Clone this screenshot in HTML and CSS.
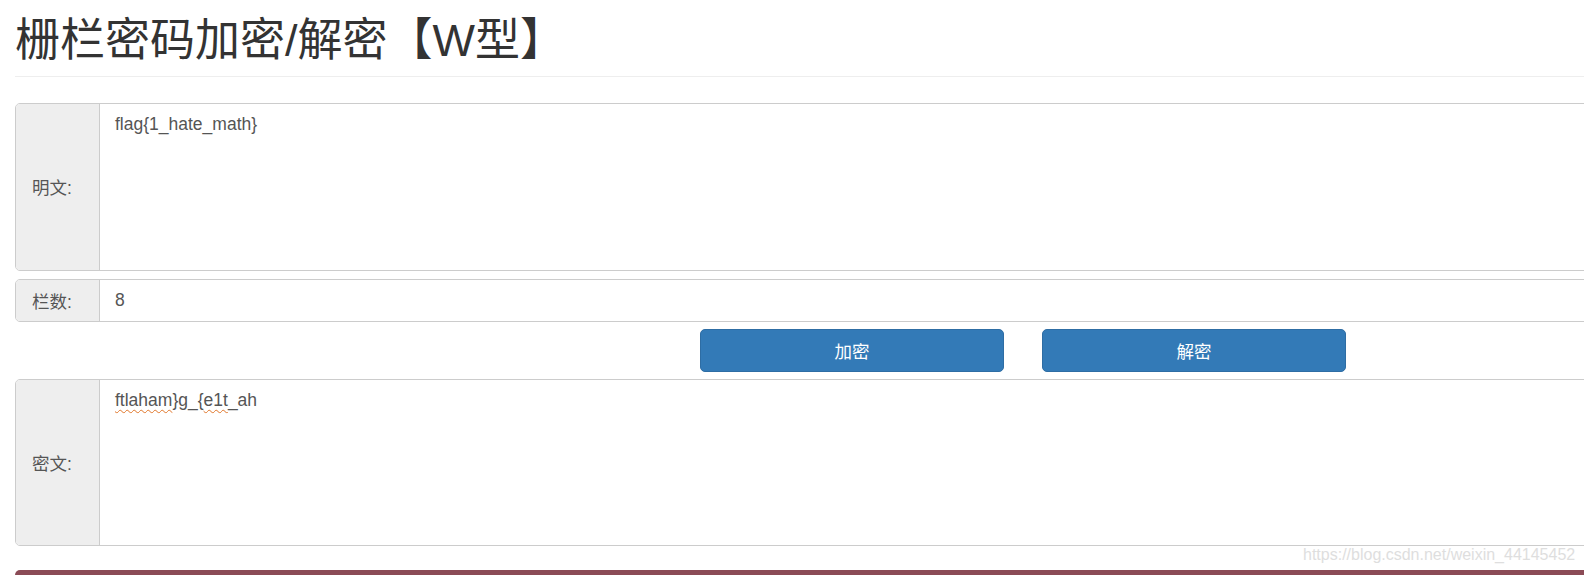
FILE: index.html
```html
<!DOCTYPE html>
<html lang="zh-CN">
<head>
<meta charset="utf-8">
<title>栅栏密码加密/解密【W型】</title>
<link rel="stylesheet" href="styles.css">
</head>
<body>
<div class="page">
  <div class="page-header">
    <h1 class="title">栅栏密码加密/解密【W型】</h1>
  </div>

  <div class="group group-tall">
    <div class="addon">明文:</div>
    <div class="field field-area">flag{1_hate_math}</div>
  </div>

  <div class="group group-short">
    <div class="addon">栏数:</div>
    <div class="field field-line">8</div>
  </div>

  <div class="actions">
    <button class="btn">加密</button>
    <button class="btn">解密</button>
  </div>

  <div class="group group-tall group-cipher">
    <div class="addon">密文:</div>
    <div class="field field-area"><span class="spell">ftlaham</span>}g_{<span class="spell">e1t</span>_ah</div>
  </div>

  <div class="bar"></div>
</div>
<div class="watermark">https://blog.csdn.net/weixin_44145452</div>
</body>
</html>
```

FILE: styles.css
```css
html, body {
  margin: 0;
  padding: 0;
  background: #fff;
  overflow: hidden;
}
body {
  width: 1584px;
  height: 575px;
  position: relative;
  font-family: "Liberation Sans", "Noto Sans CJK SC", sans-serif;
  font-size: 17.5px;
  color: #333;
}
.page {
  padding: 0 0 0 15px;
}
.page-header {
  padding-top: 16px;
  padding-bottom: 10px;
  border-bottom: 1px solid #eee;
  margin-bottom: 26px;
}
.title {
  margin: 0;
  font-size: 45px;
  font-weight: 400;
  line-height: 1.1;
  color: #333;
}
.group {
  display: flex;
  width: 1620px;
  border: 1px solid #ccc;
  border-radius: 5px;
  overflow: hidden;
  box-sizing: border-box;
}
.group-tall {
  height: 168px;
  margin-bottom: 8px;
}
.group-cipher {
  height: 167px;
  margin-bottom: 24px;
}
.group-short {
  height: 43px;
  margin-bottom: 7px;
}
.addon {
  width: 84px;
  flex: none;
  box-sizing: border-box;
  padding-left: 16px;
  background: #eee;
  border-right: 1px solid #ccc;
  color: #555;
  font-size: 17.5px;
  display: flex;
  align-items: center;
  justify-content: flex-start;
}
.field {
  flex: 1;
  color: #555;
  padding: 0 15px;
  line-height: 25px;
}
.field-area {
  padding-top: 8px;
}
.field-line {
  display: flex;
  align-items: center;
}
.spell {
  text-decoration: underline wavy #e0762a;
  text-decoration-thickness: 1px;
  text-underline-offset: 3px;
}
.actions {
  display: flex;
  gap: 38px;
  padding-left: 685px;
  margin-bottom: 7px;
}
.btn {
  width: 304px;
  height: 43px;
  background: #337ab7;
  border: 1px solid #2e6da4;
  border-radius: 5px;
  color: #fff;
  font-family: "Liberation Sans", "Noto Sans CJK SC", sans-serif;
  font-size: 17.5px;
  padding: 0;
}
.bar {
  width: 1620px;
  height: 20px;
  background: #8b4b56;
  border-top-left-radius: 5px;
}
.watermark {
  position: absolute;
  left: 1303px;
  top: 546px;
  font-size: 16px;
  color: #dedede;
  font-family: "Liberation Sans", sans-serif;
  white-space: nowrap;
}
```
